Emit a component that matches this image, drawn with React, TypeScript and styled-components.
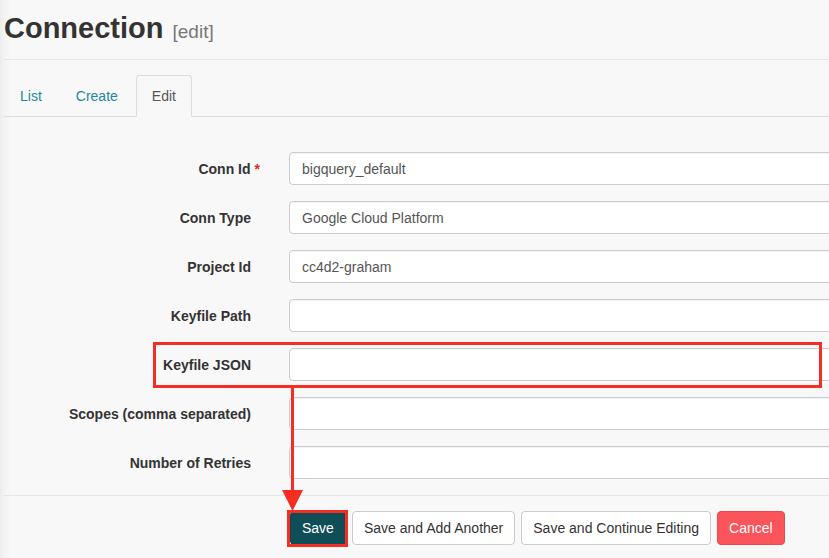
import React from "react";
import styled, { createGlobalStyle } from "styled-components";

const Global = createGlobalStyle`
  html, body { margin: 0; padding: 0; }
  body {
    background: linear-gradient(to right, #ececec 0px, #f3f3f3 4px, #f8f8f8 11px) #f8f8f8;
    font-family: "Liberation Sans", Arial, Helvetica, sans-serif;
    color: #333;
    overflow: hidden;
    width: 829px;
    height: 558px;
  }
`;

const Page = styled.div`
  position: relative;
  width: 829px;
  height: 558px;
  overflow: hidden;
`;

const Content = styled.div`
  width: 1100px;
  padding-left: 4px;
`;

const Header = styled.div`
  height: 60px;
  border-bottom: 1px solid #e5e5e5;
  box-sizing: border-box;
  padding-top: 12px;
  display: flex;
  align-items: baseline;
  gap: 9px;
`;

const Title = styled.h1`
  margin: 0;
  font-size: 29px;
  line-height: 32px;
  font-weight: 700;
  color: #333;
`;

const Small = styled.span`
  font-size: 19px;
  color: #777;
`;

const TabList = styled.ul`
  list-style: none;
  margin: 15px 0 0;
  padding: 0;
  display: flex;
  border-bottom: 1px solid #ddd;
  height: 42px;
  box-sizing: border-box;
`;

const Tab = styled.li<{ $active?: boolean }>`
  margin-right: 2px;
  margin-bottom: -1px;
  padding: 10px 15px 11px;
  line-height: 20px;
  font-size: 14px;
  border: 1px solid ${(p) => (p.$active ? "#ddd" : "transparent")};
  border-bottom-color: ${(p) => (p.$active ? "#f8f8f8" : "transparent")};
  border-radius: 4px 4px 0 0;
  color: ${(p) => (p.$active ? "#555" : "#23879b")};
  background: ${(p) => (p.$active ? "#f8f8f8" : "transparent")};
`;

const Form = styled.div`
  padding-top: 35px;
  display: flex;
  flex-direction: column;
  gap: 16px;
`;

const Row = styled.div`
  display: grid;
  grid-template-columns: 247px 1fr;
  column-gap: 38px;
  align-items: center;
`;

const Label = styled.label`
  text-align: right;
  font-size: 14px;
  font-weight: 700;
  color: #333;
  white-space: nowrap;
`;

const Required = styled.span`
  color: #e0261f;
  margin-left: 4px;
  margin-right: -9px;
`;

const Input = styled.div`
  height: 33px;
  box-sizing: border-box;
  border: 1px solid #ccc;
  border-radius: 4px;
  background: #fff;
  padding: 0 12px;
  font-size: 14px;
  color: #555;
  display: flex;
  align-items: center;
  box-shadow: inset 0 1px 1px rgba(0, 0, 0, 0.05);
`;

const Footer = styled.div`
  margin-top: 16px;
  border-top: 1px solid #e5e5e5;
  padding: 15px 0 0 286px;
  display: flex;
  gap: 6px;
`;

const Button = styled.button<{ $variant?: "primary" | "danger" }>`
  height: 34px;
  padding: 0 11px;
  font-family: "Liberation Sans", Arial, sans-serif;
  font-size: 14px;
  border-radius: 4px;
  border: 1px solid
    ${(p) => (p.$variant === "primary" ? "#0b454d" : p.$variant === "danger" ? "#e84a50" : "#ccc")};
  background: ${(p) =>
    p.$variant === "primary" ? "#0f4e57" : p.$variant === "danger" ? "#fb545a" : "#fff"};
  color: ${(p) => (p.$variant ? "#fff" : "#333")};
`;

const RedBox = styled.div`
  position: absolute;
  border: 3px solid #f52d22;
  box-sizing: border-box;
  pointer-events: none;
`;

const ArrowLine = styled.div`
  position: absolute;
  left: 291px;
  top: 387px;
  width: 3px;
  height: 106px;
  background: #f52d22;
`;

const ArrowHead = styled.svg`
  position: absolute;
  left: 282px;
  top: 490px;
`;

const fields: { label: string; value?: string; required?: boolean }[] = [
  { label: "Conn Id", value: "bigquery_default", required: true },
  { label: "Conn Type", value: "Google Cloud Platform" },
  { label: "Project Id", value: "cc4d2-graham" },
  { label: "Keyfile Path" },
  { label: "Keyfile JSON" },
  { label: "Scopes (comma separated)" },
  { label: "Number of Retries" },
];

export default function App() {
  return (
    <Page>
      <Global />
      <Content>
        <Header>
          <Title>Connection</Title>
          <Small>[edit]</Small>
        </Header>
        <TabList>
          <Tab>List</Tab>
          <Tab>Create</Tab>
          <Tab $active>Edit</Tab>
        </TabList>
        <Form>
          {fields.map((f) => (
            <Row key={f.label}>
              <Label>
                {f.label}
                {f.required && <Required>*</Required>}
              </Label>
              <Input>{f.value}</Input>
            </Row>
          ))}
        </Form>
        <Footer>
          <Button $variant="primary">Save</Button>
          <Button>Save and Add Another</Button>
          <Button>Save and Continue Editing</Button>
          <Button $variant="danger">Cancel</Button>
        </Footer>
      </Content>
      <RedBox style={{ left: 153, top: 342, width: 669, height: 46 }} />
      <ArrowLine />
      <ArrowHead width="21" height="21" viewBox="0 0 21 21">
        <polygon points="0,0 21,0 10.5,21" fill="#f52d22" />
      </ArrowHead>
      <RedBox style={{ left: 287, top: 510, width: 61, height: 37 }} />
    </Page>
  );
}
